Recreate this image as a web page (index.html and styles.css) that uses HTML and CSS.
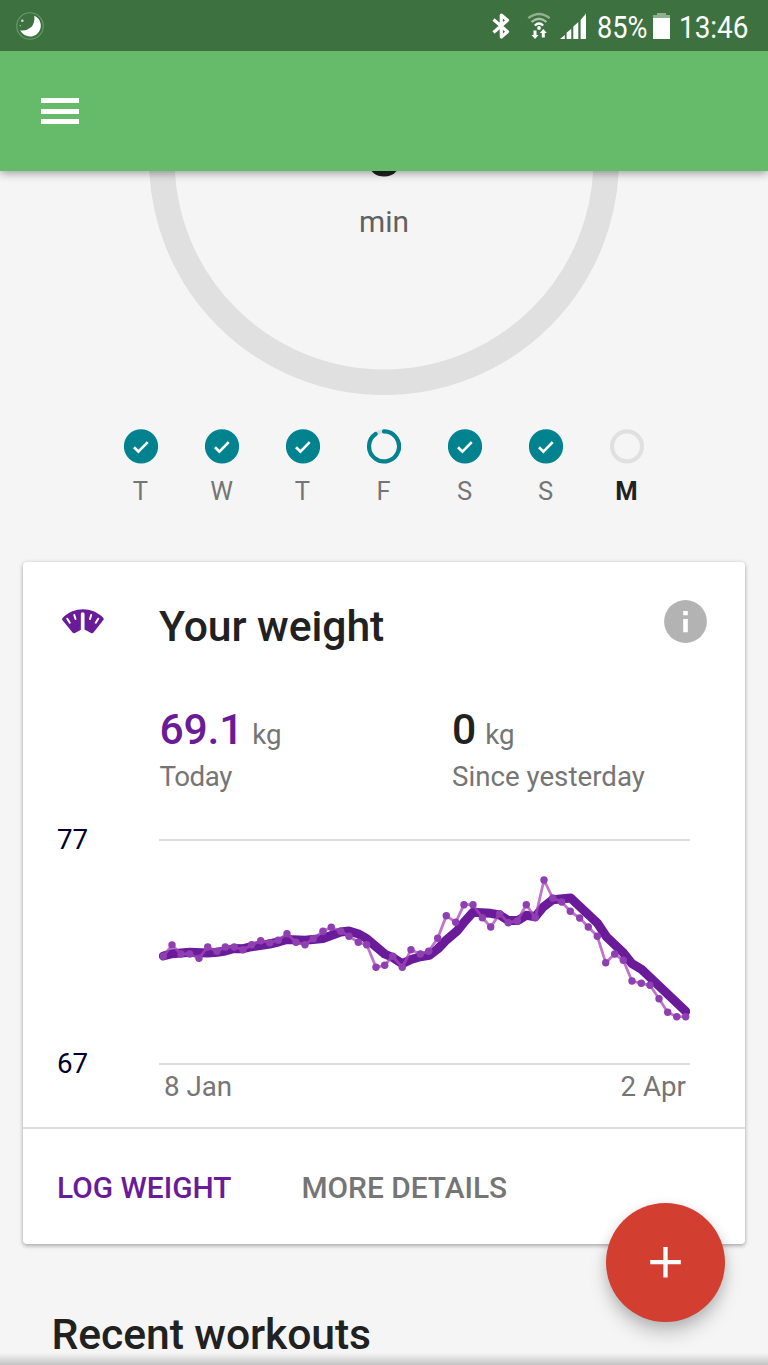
FILE: index.html
```html
<!DOCTYPE html>
<html lang="en">
<head>
<meta charset="utf-8">
<title>Fitness</title>
<link rel="stylesheet" href="styles.css">
</head>
<body>
<div class="screen">
  <header class="status-bar">
    <svg class="moon" width="30" height="30" viewBox="0 0 30 30">
      <circle cx="15" cy="15" r="13.3" fill="none" stroke="#6a9a6b" stroke-width="1.1"/>
      <path d="M19.200 4.700A10.800 10.800 0 1 1 5.200 19.200Q11.500 20.200 16 16.300Q20.200 12 19.200 4.700Z" fill="#fff"/>
      <circle cx="7.300" cy="9.700" r="1.300" fill="#cfdfcf"/><circle cx="5.300" cy="14.700" r=".8" fill="#9dbd9d"/>
    </svg>
    <div class="indicators">
      <svg class="bluetooth" width="18" height="28" viewBox="0 0 18 28">
        <path d="M1.500 7.500L15.500 19.700L9.300 25V3L15.500 8.300L1.500 20.500" fill="none" stroke="#fff" stroke-width="3.200" stroke-linejoin="round"/>
      </svg>
      <svg class="wifi" width="24" height="28" viewBox="0 0 24 28">
        <g fill="none" stroke-width="2.300">
          <path d="M1.300 6.200Q12 -2.300 22.700 6.200" stroke="#8fb190"/>
          <path d="M4.500 10Q12 3.500 19.500 10" stroke="#a7c1a7"/>
          <path d="M7.800 13.500Q12 9.600 16.200 13.500" stroke="#fff"/>
        </g>
        <circle cx="12" cy="16" r="1.900" fill="#fff"/>
        <path d="M6.500 18.500h3v4.500h2l-3.500 4-3.500-4h2zM14.800 25.500v-4.500h-2l3.500-4 3.500 4h-2v4.500z" fill="#fff"/>
      </svg>
      <svg class="signal" width="27" height="27" viewBox="0 0 27 27">
        <path d="M0 26L4.800 22v4zM6.600 19.800l4.700-4V26H6.600zM13.300 13.500l5-4.400V26h-5zM20.600 7L26 .6V26h-5.400z" fill="#fff"/>
      </svg>
      <svg class="percent" width="51" height="38"><text x="0" y="26.500" textLength="50.500" lengthAdjust="spacingAndGlyphs">85%</text></svg>
      <svg class="battery" width="17" height="27" viewBox="0 0 17 27">
        <path d="M4 0h9v2h4v4H0V2h4z" fill="#8fb190"/><path d="M0 5h17v21H0z" fill="#fff"/>
      </svg>
      <svg class="clock" width="71" height="38"><text x="0" y="26.500" textLength="69.500" lengthAdjust="spacingAndGlyphs">13:46</text></svg>
    </div>
  </header>
  <nav class="app-bar">
    <div class="menu"><i></i><i></i><i></i></div>
  </nav>
  <main>
    <section class="goal">
      <svg class="ring" width="480" height="226" viewBox="144 170 480 226">
        <circle cx="384" cy="160" r="222.200" fill="none" stroke="#e0e0e0" stroke-width="25.600"/>
        <text class="minutes" x="384" y="175.500" text-anchor="middle">0</text>
      </svg>
      <span class="unit">min</span>
    </section>
    <section class="week">
      <div class="day"><svg width="34" height="35" viewBox="0 0 34 35"><circle cx="17" cy="17.400" r="17.100" fill="#00838f"/><path d="M10 18.200l4.400 4.400 9.300-9.500" class="tick"/></svg><span>T</span></div>
      <div class="day"><svg width="34" height="35" viewBox="0 0 34 35"><circle cx="17" cy="17.400" r="17.100" fill="#00838f"/><path d="M10 18.200l4.400 4.400 9.300-9.500" class="tick"/></svg><span>W</span></div>
      <div class="day"><svg width="34" height="35" viewBox="0 0 34 35"><circle cx="17" cy="17.400" r="17.100" fill="#00838f"/><path d="M10 18.200l4.400 4.400 9.300-9.500" class="tick"/></svg><span>T</span></div>
      <div class="day"><svg width="34" height="35" viewBox="0 0 34 35"><circle cx="17" cy="17.400" r="15" class="track"/><path d="M17 2.400A15 15 0 1 1 8.600 5" fill="none" stroke="#00838f" stroke-width="4.200" stroke-linecap="round"/></svg><span>F</span></div>
      <div class="day"><svg width="34" height="35" viewBox="0 0 34 35"><circle cx="17" cy="17.400" r="17.100" fill="#00838f"/><path d="M10 18.200l4.400 4.400 9.300-9.500" class="tick"/></svg><span>S</span></div>
      <div class="day"><svg width="34" height="35" viewBox="0 0 34 35"><circle cx="17" cy="17.400" r="17.100" fill="#00838f"/><path d="M10 18.200l4.400 4.400 9.300-9.500" class="tick"/></svg><span>S</span></div>
      <div class="day today"><svg width="34" height="35" viewBox="0 0 34 35"><circle cx="17" cy="17.400" r="15" class="track"/></svg><span>M</span></div>
    </section>
    <article class="card">
      <div class="card-head">
        <svg class="scale" width="44" height="26" viewBox="0 0 44 26">
          <path d="M1 10.500Q1 9.500 2 8.600C13 -2.500 31 -2.500 42 8.600Q43 9.500 42.600 10.800L32.500 23.500Q31.500 24.800 30 24L24 20.800H20L14 24Q12.500 24.800 11.500 23.500L1.300 11Z" fill="#6a1b9a"/>
          <g stroke="#fff" stroke-linecap="round" fill="none">
            <path d="M21.700 5V23" stroke-width="3.700"/>
            <path d="M6.300 9.700l2.500 4M37.200 9.700l-2.500 4M13.300 6l1.200 4M30.200 6l-1.200 4" stroke-width="2"/>
          </g>
        </svg>
        <h2>Your weight</h2>
        <svg class="info" width="43" height="43" viewBox="0 0 43 43"><circle cx="21.500" cy="21.500" r="21.400" fill="#b3b3b3"/><path d="M19.200 11h4.600v4.300h-4.600zM19.200 19h4.600v13.300h-4.600z" fill="#fff"/></svg>
      </div>
      <div class="stats">
        <div class="stat"><p><b class="now">69.1</b><span>kg</span></p><small class="when">Today</small></div>
        <div class="stat"><p><b>0</b><span>kg</span></p><small>Since yesterday</small></div>
      </div>
      <div class="chart">
        <div class="axis"><span>77</span><span>67</span></div>
        <div class="plot">
          <svg width="531" height="226" viewBox="159 839 531 226">
            <defs>
              <marker id="dot" markerUnits="userSpaceOnUse" markerWidth="8" markerHeight="8" refX="4" refY="4"><circle cx="4" cy="4" r="3.700" fill="#8e3fb0"/></marker>
            </defs>
            <path d="M159 840h531M159 1064h531" stroke="#dedede" stroke-width="2"/>
            <polyline class="trend" points="163.300,956 172,953.700 190,952.300 207.700,953 217,952.300 225.300,951 234.300,948.500 243,948.700 251.700,946.700 269.700,944 278.300,942 287,939.500 305,940.300 323,938.500 340.700,932 349,931 358,933.700 366.700,938.700 384.700,954 392.700,957.500 402.300,963.700 411,959.500 420.300,956.700 429.300,955.300 437.700,949 446.700,939.700 456.700,931.300 464,922.300 473,912.300 490.700,913.300 499.700,915 508.300,920.500 518,920.500 526.300,915.300 535.300,916.700 543.300,907 552.700,899.700 570.700,898 597.300,923 606.700,937 623.300,952.700 632,963.700 642,969.700 685.700,1011.300"/>
            <polyline class="daily" marker-start="url(#dot)" marker-mid="url(#dot)" marker-end="url(#dot)" points="163.300,956.300 172,945 181,954 189.700,954 199,958.300 207.700,947 217,951.300 225.300,947 234.300,947 243,949.700 251.700,944.700 260.700,940.700 269.700,942.700 278.300,940.300 287,933.700 296,942.300 305,944.700 313.300,938.700 323,931.300 331.300,927.300 340.700,931.300 349,936.300 358.300,942.300 366.700,944.700 376,967.300 384.700,965.300 392.700,956.300 402.300,967.300 411,949.700 420.300,954 428.700,951.300 437.700,938.300 446.300,915.700 455.700,922.300 464,904.700 473,904.700 482.300,917.700 490.700,927 499.700,913.700 508.300,922.700 517.300,921 526.300,904.700 535.300,917.700 544,880 552.700,898 561.700,902 570.300,911.300 579.700,918 588.300,927 597.300,936.300 605.700,962.700 614.700,954 623.300,960.300 632,981 641.300,983.300 650,985.300 659,998.700 667.700,1012.300 676.700,1016.700 685.700,1016.700"/>
          </svg>
          <div class="dates"><span>8 Jan</span><span>2 Apr</span></div>
        </div>
      </div>
      <div class="actions"><a class="primary">LOG WEIGHT</a><a>MORE DETAILS</a></div>
    </article>
    <h2 class="recent">Recent workouts</h2>
  </main>
  <div class="bottom-shade"></div>
  <button class="fab" aria-label="Add"><svg width="31" height="31" viewBox="0 0 31 31"><path d="M.2 15.200h30.600M15.500 0v30.500" stroke="#fff" stroke-width="4.300"/></svg></button>
</div>
</body>
</html>
```
FILE: styles.css
```css
* { box-sizing: border-box; }
body { margin: 0; background: #f5f5f5; font-family: Roboto, sans-serif; color: #212121; }
svg { display: block; flex: none; }
h2, p { margin: 0; }
.screen { position: relative; width: 768px; height: 1365px; overflow: hidden; display: flex; flex-direction: column; background: #f5f5f5; }

.status-bar { flex: none; position: relative; z-index: 2; height: 51px; background: #3d7140; display: flex; justify-content: space-between; padding: 11px 18px 0 15px; }
.indicators { display: flex; align-items: flex-start; }
.indicators text { font-size: 31.500px; fill: #fff; }
.percent, .clock { overflow: visible; }
.bluetooth { margin-top: 1px; }
.wifi { margin: 1px 0 0 17px; }
.signal { margin: 2px 0 0 9px; }
.percent { margin-left: 10px; }
.battery { margin: 2px 0 0 5px; }
.clock { margin-left: 9px; }

.app-bar { flex: none; position: relative; z-index: 1; height: 119.500px; background: #66bb6a; box-shadow: 0 2px 9px rgba(0, 0, 0, .38); padding: 47px 40.500px; }
.menu { width: 38.500px; display: grid; gap: 5.700px; }
.menu i { height: 5px; background: #fff; }

main { flex: none; display: flex; flex-direction: column; }
.goal { display: flex; flex-direction: column; align-items: center; height: 258px; }
.ring { margin-top: -.5px; }
.minutes { font-size: 72px; font-weight: 500; fill: #212121; }
.unit { margin-top: -192.500px; font-size: 29.870px; line-height: 36px; color: #616161; }

.week { display: flex; padding-left: 100px; height: 133.500px; }
.day { width: 81px; display: flex; flex-direction: column; align-items: center; }
.day span { margin-top: 11px; font-size: 25.600px; line-height: 32px; color: #757575; }
.day.today span { font-weight: 700; color: #212121; }
.tick { fill: none; stroke: #fff; stroke-width: 2.700; }
.track { fill: none; stroke: #e0e0e0; stroke-width: 4.200; }

.card { width: 722px; height: 682px; margin-left: 23px; background: #fff; border-radius: 4px; box-shadow: 0 2px 4px rgba(0, 0, 0, .27), 0 0 4px rgba(0, 0, 0, .1); }
.card-head { display: flex; align-items: flex-start; height: 142px; padding: 38px 38px 0; }
.scale { margin-top: 9px; }
.card-head h2 { flex: 1; margin-left: 54px; margin-top: 1px; letter-spacing: -.05px; }
h2 { font-size: 42.670px; line-height: 50px; font-weight: 500; }
.stats { display: flex; padding-left: 136.500px; height: 135px; }
.stat { width: 292.500px; color: #757575; }
.stat p { display: flex; align-items: baseline; height: 56px; line-height: 50px; }
.stat b { font-size: 42.670px; font-weight: 500; color: #212121; }
.stat .now { color: #6a1b9a; letter-spacing: -.2px; }
.stat p span { margin-left: 9px; font-size: 27.700px; }
.stat small { display: block; font-size: 27.700px; line-height: 34px; }
.stat .when { letter-spacing: -.45px; }
.chart { display: flex; height: 288px; }
.axis { width: 136px; height: 258px; padding-left: 34px; display: flex; flex-direction: column; justify-content: space-between; margin-top: -16px; font-size: 27.700px; line-height: 34px; color: #00002b; }
.trend { fill: none; stroke: #6a1b9a; stroke-width: 9; stroke-linejoin: round; stroke-linecap: round; }
.daily { fill: none; stroke: rgba(171, 71, 188, .75); stroke-width: 2.800; stroke-linejoin: round; }
.dates { display: flex; justify-content: space-between; padding: 5px 4px 0 5px; font-size: 27.700px; line-height: 34px; color: #757575; }
.actions { display: flex; gap: 70px; height: 117px; border-top: 2px solid #dedede; padding: 41px 34px 0; font-size: 29.870px; line-height: 36px; font-weight: 500; color: #757575; }
.primary { color: #6a1b9a; }
.recent { margin: 65px 0 0 51.500px; letter-spacing: -.08px; }

.bottom-shade { position: absolute; left: 0; right: 0; bottom: 0; height: 12px; background: linear-gradient(rgba(0, 0, 0, 0), rgba(0, 0, 0, .2)); }
.fab { position: absolute; left: 606px; top: 1203px; width: 119px; height: 119px; padding: 0; border: 0; border-radius: 50%; background: #d23f31; display: grid; place-items: center; box-shadow: 0 12px 18px rgba(0, 0, 0, .18), 0 3px 12px rgba(0, 0, 0, .12); }
```
